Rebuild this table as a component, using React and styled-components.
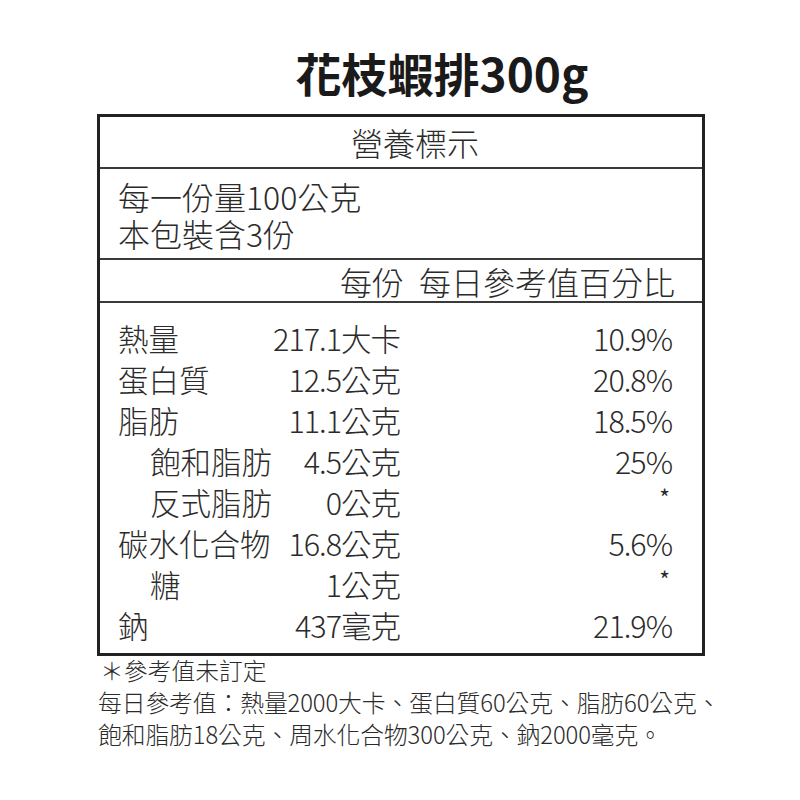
import React from 'react';
import styled, { createGlobalStyle } from 'styled-components';

const GlobalStyle = createGlobalStyle`
  html, body { margin: 0; padding: 0; background: #fff; }
  body { font-family: 'Noto Sans CJK TC', 'Noto Sans', sans-serif; color: #2b2b2b; }
`;

// --- 스타일 ---
const Page = styled.div`
  width: 800px; height: 800px; box-sizing: border-box;
  padding: 45px 0 0 97px; background: #fff;
`;
const Title = styled.h1`
  margin: 0 0 14px; padding-left: 82px; width: 608px; box-sizing: border-box;
  text-align: center; font-size: 46px; line-height: 55px; font-weight: 700;
  color: #1a1a1a;
`;
const Label = styled.div`
  width: 608px; box-sizing: border-box; border: 3px solid #222;
  font-weight: 300;
`;
const Section = styled.div`
  border-bottom: 2px solid #3a3a3a;
  box-sizing: border-box;
`;
const Heading = styled(Section)`
  height: 52px; display: flex; align-items: center; justify-content: center;
  padding-left: 28px; font-size: 32px;
`;
const Serving = styled(Section)`
  height: 91px; padding: 9px 0 0 18px; font-size: 32px; line-height: 37px;
`;
const ColumnHead = styled(Section)`
  height: 43px; display: flex; justify-content: flex-end; align-items: center;
  gap: 15px; padding-right: 27px; font-size: 32px;
`;
const Rows = styled.div`
  display: grid; grid-template-columns: 154px 128px 1fr;
  grid-auto-rows: 41px; align-items: center;
  padding: 14px 30px 8px 18px; font-size: 30.5px;
`;
const Name = styled.span`
  padding-left: ${p => (p.$sub ? '32px' : '0')};
  white-space: nowrap;
`;
const Amount = styled.span`
  text-align: right; white-space: nowrap; letter-spacing: -1px;
`;
const Percent = styled.span`
  text-align: right; letter-spacing: -1px;
`;
const Star = styled.span`
  text-align: right; align-self: start; margin-right: 2px;
  font-size: 23px; line-height: 33px; font-weight: 400;
`;
const Notes = styled.div`
  margin-top: -2px; font-size: 23.8px; line-height: 32px; font-weight: 300;
  white-space: nowrap;
`;
const NoteLine = styled.div`
  padding-left: ${p => (p.$star ? '3px' : '1px')};
  letter-spacing: ${p => (p.$star ? '0' : '-0.1px')};
`;

const rows = [
  { name: '熱量', amount: '217.1大卡', pct: '10.9%' },
  { name: '蛋白質', amount: '12.5公克', pct: '20.8%' },
  { name: '脂肪', amount: '11.1公克', pct: '18.5%' },
  { name: '飽和脂肪', amount: '4.5公克', pct: '25%', sub: true },
  { name: '反式脂肪', amount: '0公克', pct: null, sub: true },
  { name: '碳水化合物', amount: '16.8公克', pct: '5.6%' },
  { name: '糖', amount: '1公克', pct: null, sub: true },
  { name: '鈉', amount: '437毫克', pct: '21.9%' },
];

export default function App() {
  return (
    <>
      <GlobalStyle />
      <Page>
        <Title>花枝蝦排300g</Title>
        <Label>
          <Heading>營養標示</Heading>
          <Serving>
            <div>每一份量100公克</div>
            <div>本包裝含3份</div>
          </Serving>
          <ColumnHead>
            <span>每份</span>
            <span>每日參考值百分比</span>
          </ColumnHead>
          <Rows>
            {rows.map(r => (
              <React.Fragment key={r.name}>
                <Name $sub={r.sub}>{r.name}</Name>
                <Amount>{r.amount}</Amount>
                {r.pct ? <Percent>{r.pct}</Percent> : <Star>*</Star>}
              </React.Fragment>
            ))}
          </Rows>
        </Label>
        <Notes>
          <NoteLine $star>＊參考值未訂定</NoteLine>
          <NoteLine>每日參考值：熱量2000大卡、蛋白質60公克、脂肪60公克、</NoteLine>
          <NoteLine>飽和脂肪18公克、周水化合物300公克、鈉2000毫克。</NoteLine>
        </Notes>
      </Page>
    </>
  );
}
